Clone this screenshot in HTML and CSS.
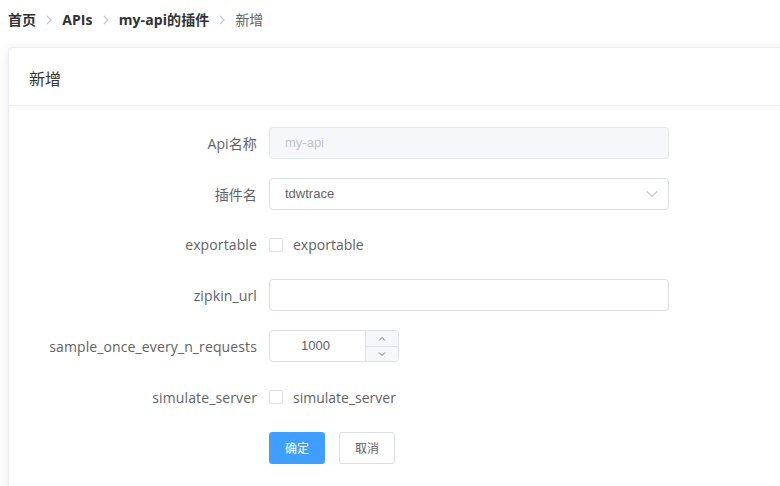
FILE: index.html
```html
<!DOCTYPE html>
<html lang="zh">
<head>
<meta charset="utf-8">
<title>新增</title>
<link rel="stylesheet" href="styles.css">
</head>
<body>
<div class="page">
  <nav class="breadcrumb">
    <span class="crumb strong">首页</span>
    <span class="sep"><svg width="8" height="10" viewBox="0 0 8 10"><path d="M2 1l4 4-4 4" fill="none" stroke="#C0C4CC" stroke-width="1.2"/></svg></span>
    <span class="crumb strong">APIs</span>
    <span class="sep"><svg width="8" height="10" viewBox="0 0 8 10"><path d="M2 1l4 4-4 4" fill="none" stroke="#C0C4CC" stroke-width="1.2"/></svg></span>
    <span class="crumb strong">my-api的插件</span>
    <span class="sep"><svg width="8" height="10" viewBox="0 0 8 10"><path d="M2 1l4 4-4 4" fill="none" stroke="#C0C4CC" stroke-width="1.2"/></svg></span>
    <span class="crumb current">新增</span>
  </nav>

  <div class="card">
    <div class="card-header">新增</div>
    <div class="card-body">
      <div class="form-item">
        <label class="form-label">Api名称</label>
        <div class="input disabled">my-api</div>
      </div>
      <div class="form-item">
        <label class="form-label">插件名</label>
        <div class="input select">
          <span>tdwtrace</span>
          <svg class="select-arrow" width="12" height="8" viewBox="0 0 12 8"><path d="M1 1.5l5 5 5-5" fill="none" stroke="#C0C4CC" stroke-width="1.1"/></svg>
        </div>
      </div>
      <div class="form-item">
        <label class="form-label">exportable</label>
        <div class="checkbox"><span class="box"></span><span class="check-label">exportable</span></div>
      </div>
      <div class="form-item">
        <label class="form-label">zipkin_url</label>
        <div class="input"></div>
      </div>
      <div class="form-item">
        <label class="form-label">sample_once_every_n_requests</label>
        <div class="number">
          <div class="number-value">1000</div>
          <div class="number-controls">
            <span class="ctrl up"><svg width="8" height="5" viewBox="0 0 8 5"><path d="M1 4.5l3-3 3 3" fill="none" stroke="#606266" stroke-width="0.9"/></svg></span>
            <span class="ctrl down"><svg width="8" height="5" viewBox="0 0 8 5"><path d="M1 0.5l3 3 3-3" fill="none" stroke="#606266" stroke-width="0.9"/></svg></span>
          </div>
        </div>
      </div>
      <div class="form-item">
        <label class="form-label">simulate_server</label>
        <div class="checkbox"><span class="box"></span><span class="check-label">simulate_server</span></div>
      </div>
      <div class="form-item">
        <span class="form-label"></span>
        <button class="btn primary">确定</button>
        <button class="btn">取消</button>
      </div>
    </div>
  </div>
</div>
</body>
</html>
```

FILE: styles.css
```css
html, body {
  margin: 0;
  padding: 0;
  background: #fff;
  overflow: hidden;
}
body {
  font-family: "Open Sans", "Noto Sans CJK SC", sans-serif;
  color: #606266;
}
.page {
  padding: 13px 0 0 8px;
  width: 820px;
}
.breadcrumb {
  display: flex;
  align-items: center;
  height: 14px;
  line-height: 14px;
  font-size: 14px;
}
.crumb.strong {
  font-weight: 700;
  color: #303133;
  letter-spacing: 0.1px;
}
.crumb.current {
  color: #606266;
}
.sep {
  display: flex;
  align-items: center;
  margin: 0 9px;
}
.card {
  margin-top: 20px;
  border: 1px solid #EBEEF5;
  border-radius: 4px;
  box-shadow: 0 2px 12px 0 rgba(0, 0, 0, 0.1);
  background: #fff;
  height: 470px;
}
.card-header {
  padding: 20px 20px 15px;
  font-size: 16px;
  line-height: 22px;
  color: #303133;
  border-bottom: 1px solid #EBEEF5;
}
.card-body {
  padding: 21px 20px 20px;
}
.form-item {
  display: flex;
  align-items: center;
  height: 32px;
  margin-bottom: 18.83px;
}
.form-label {
  width: 240px;
  flex: none;
  box-sizing: border-box;
  padding-right: 12px;
  text-align: right;
  font-size: 14px;
  letter-spacing: 0.12px;
  color: #606266;
}
.input {
  box-sizing: border-box;
  width: 400px;
  height: 32px;
  border: 1px solid #DCDFE6;
  border-radius: 4px;
  padding: 0 15px;
  font-family: "Liberation Sans", "Noto Sans CJK SC", sans-serif;
  font-size: 13px;
  line-height: 30px;
  color: #606266;
  background: #fff;
}
.input.disabled {
  background: #F5F7FA;
  border-color: #E4E7ED;
  color: #C0C4CC;
}
.input.select {
  display: flex;
  align-items: center;
  justify-content: space-between;
  padding-right: 10px;
}
.checkbox {
  display: flex;
  align-items: center;
}
.box {
  box-sizing: border-box;
  width: 14px;
  height: 14px;
  border: 1px solid #DCDFE6;
  border-radius: 2px;
  background: #fff;
}
.check-label {
  margin-left: 10px;
  font-size: 14px;
  color: #606266;
}
.number {
  box-sizing: border-box;
  width: 130px;
  height: 32px;
  border: 1px solid #DCDFE6;
  border-radius: 4px;
  display: flex;
  overflow: hidden;
}
.number-value {
  flex: 1;
  font-family: "Liberation Sans", sans-serif;
  font-size: 13px;
  line-height: 30px;
  text-align: center;
  color: #606266;
  padding-right: 4px;
}
.number-controls {
  width: 32px;
  border-left: 1px solid #DCDFE6;
  display: flex;
  flex-direction: column;
  background: #F5F7FA;
}
.ctrl {
  flex: 1;
  display: flex;
  align-items: center;
  justify-content: center;
}
.ctrl.up {
  border-bottom: 1px solid #DCDFE6;
}
.btn {
  box-sizing: border-box;
  width: 56px;
  height: 32px;
  border: 1px solid #DCDFE6;
  border-radius: 3px;
  background: #fff;
  color: #606266;
  font-family: "Noto Sans CJK SC", sans-serif;
  font-size: 12px;
  padding: 0;
  margin: 0;
}
.btn.primary {
  background: #409EFF;
  border-color: #409EFF;
  color: #fff;
}
.btn + .btn {
  margin-left: 14px;
}
```
